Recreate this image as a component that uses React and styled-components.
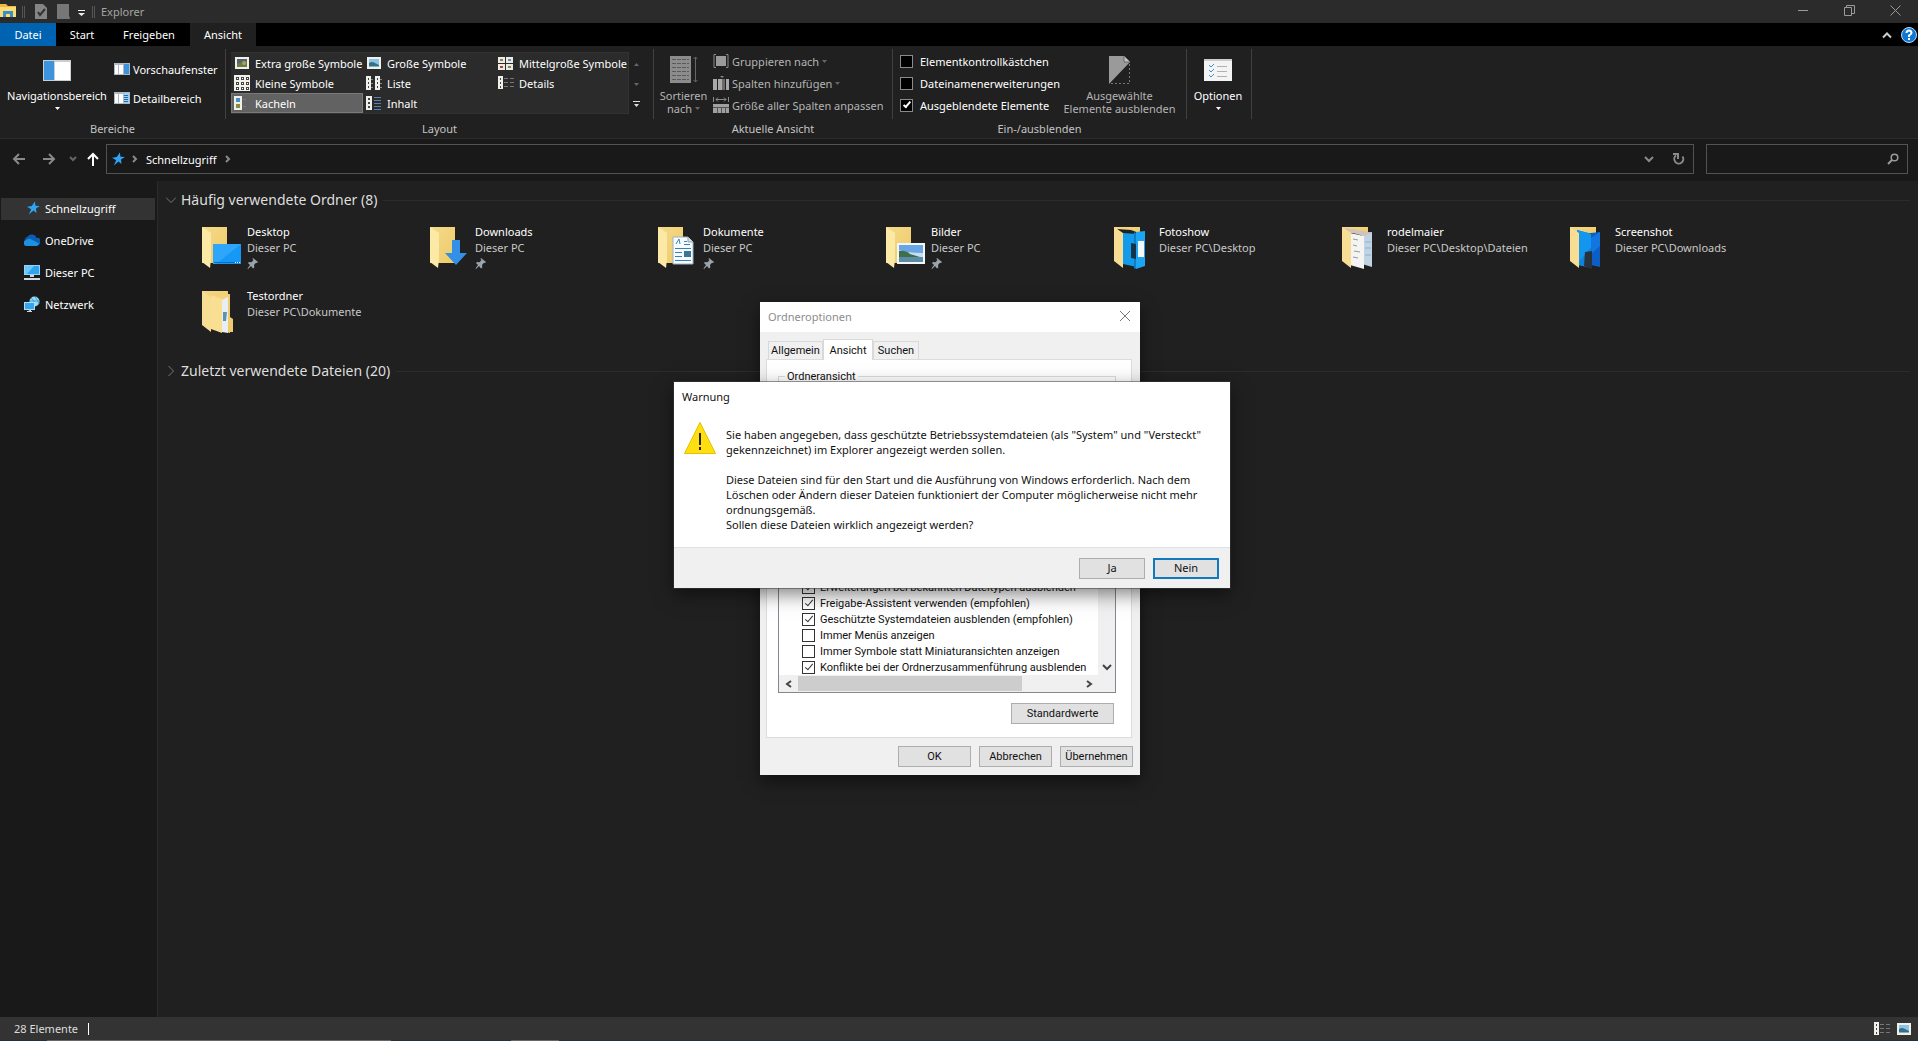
import React from "react";
import styled, { createGlobalStyle } from "styled-components";

const Global = createGlobalStyle`
  *, *::before, *::after { box-sizing: border-box; }
  body { margin: 0; background: #202020; }
  body, button, input { font-family: "Noto Sans", "Open Sans", sans-serif; font-size: 11px; }
  button { margin: 0; padding: 0; border: 0; background: none; color: inherit; text-align: left; }
  h2, p { margin: 0; font-weight: 400; }
  svg { display: block; flex: none; }
`;

const Window = styled.div`
  position: relative;
  display: flex;
  flex-direction: column;
  height: 100vh;
  color: #fff;
  overflow: hidden;
`;

/* ---------- title bar ---------- */
const TitleBar = styled.header`
  display: flex;
  align-items: flex-start;
  height: 23px;
  background: #2b2b2b;
  color: #a5a5a5;
`;
const QuickBar = styled.div`
  display: flex;
  align-items: center;
  flex: 1;
`;
const WindowTitle = styled.span`
  line-height: 20px;
`;
const CaptionButton = styled.button`
  display: flex;
  justify-content: center;
  width: 46px;
  height: 20px;
  align-items: center;
`;

/* ---------- ribbon ---------- */
const TabStrip = styled.nav`
  display: flex;
  height: 23px;
  background: #000;
`;
const RibbonTab = styled.button`
  width: ${(p) => p.$width}px;
  text-align: center;
  line-height: 22px;
  background: ${(p) => (p.$kind === "file" ? "#0063b1" : p.$kind === "active" ? "#202020" : "transparent")};
`;
const StripTools = styled.div`
  display: flex;
  align-items: center;
  gap: 8px;
  margin-left: auto;
`;
const Ribbon = styled.section`
  display: flex;
  height: 93px;
  background: #202020;
  border-bottom: 1px solid #2d2d2d;
`;
const Group = styled.div`
  display: flex;
  flex-direction: column;
  width: ${(p) => p.$width}px;
`;
const GroupBody = styled.div`
  display: flex;
  height: 74px;
  padding: 0 ${(p) => p.$pad || 0}px;
`;
const GroupLabel = styled.div`
  text-align: center;
  line-height: 18px;
  color: #c4c4c4;
`;
const Separator = styled.div`
  width: 1px;
  height: 70px;
  margin-top: 3px;
  background: #404040;
`;
const BigButton = styled.button`
  display: flex;
  flex-direction: column;
  align-items: center;
  width: ${(p) => p.$width}px;
  padding-top: 10px;
  text-align: center;
  line-height: 13px;
  white-space: nowrap;
  color: ${(p) => (p.$dim ? "#b4b4b4" : "#fff")};
`;
const IconSlot = styled.span`
  display: flex;
  align-items: center;
  height: 28px;
  margin-bottom: 5px;
`;
const ArrowLine = styled.span`
  display: flex;
  align-items: center;
  gap: 3px;
  height: 13px;
`;
const Stack = styled.div`
  display: flex;
  flex-direction: column;
  padding-top: ${(p) => p.$top}px;
  gap: ${(p) => p.$gap}px;
`;
const SmallButton = styled.button`
  display: flex;
  align-items: center;
  gap: 3px;
  height: 20px;
  white-space: nowrap;
  color: ${(p) => (p.$dim ? "#b4b4b4" : "#fff")};
`;
const Gallery = styled.div`
  display: grid;
  grid-template-columns: repeat(3, 132px);
  grid-template-rows: repeat(3, 20px);
  width: 398px;
  height: 62px;
  margin: 6px 0 0 5px;
  background: #2b2b2b;
  border: 1px solid #333;
  border-left-width: 0;
`;
const GalleryItem = styled.button`
  display: flex;
  align-items: center;
  gap: 5px;
  padding-left: 3px;
  white-space: nowrap;
  background: ${(p) => (p.$selected ? "#626262" : "transparent")};
  box-shadow: ${(p) => (p.$selected ? "inset 0 0 0 1px #7a7a7a" : "none")};
`;
const GalleryScroll = styled.div`
  display: grid;
  grid-template-rows: repeat(3, 20px);
  place-items: center;
  width: 15px;
  margin-top: 8px;
`;
const OptionLabel = styled.label`
  display: flex;
  align-items: center;
  gap: 7px;
  height: 22px;
  white-space: nowrap;
`;
const Check = styled.input.attrs({ type: "checkbox" })`
  appearance: none;
  position: relative;
  flex: none;
  width: 13px;
  height: 13px;
  margin: 0;
  border: 1px solid ${(p) => (p.$light ? "#333" : "#8a8a8a")};
  background: ${(p) => (p.$light ? "#fff" : "#000")};
  &:checked::before {
    content: "";
    position: absolute;
    left: 4px;
    top: 0;
    width: 4px;
    height: 8px;
    border: solid ${(p) => (p.$light ? "#333" : "#fff")};
    border-width: 0 ${(p) => (p.$light ? "1px 1px" : "2px 2px")} 0;
    transform: rotate(40deg);
  }
`;

/* ---------- address row ---------- */
const AddressRow = styled.div`
  display: flex;
  align-items: center;
  height: 42px;
  padding: 0 10px 2px 12px;
  background: #191919;
`;
const NavButtons = styled.div`
  display: flex;
  align-items: center;
  width: 94px;
`;
const NavButton = styled.button`
  display: flex;
  width: ${(p) => p.$width}px;
`;
const AddressBox = styled.div`
  display: flex;
  align-items: center;
  flex: 1;
  height: 30px;
  padding: 0 7px 0 5px;
  border: 1px solid #535353;
`;
const Crumb = styled.button`
  margin: 0 9px 0 7px;
`;
const AddressTools = styled.div`
  display: flex;
  align-items: center;
  gap: 18px;
  margin-left: auto;
`;
const SearchBox = styled.label`
  display: flex;
  align-items: center;
  width: 202px;
  height: 30px;
  margin-left: 12px;
  padding: 0 8px;
  border: 1px solid #535353;
`;
const SearchInput = styled.input`
  flex: 1;
  min-width: 0;
  border: 0;
  outline: 0;
  background: none;
  color: #fff;
`;

/* ---------- body ---------- */
const Body = styled.div`
  display: flex;
  flex: 1;
  min-height: 0;
`;
const Sidebar = styled.nav`
  display: flex;
  flex-direction: column;
  gap: 10px;
  width: 158px;
  padding: 17px 2px 0 1px;
  background: #191919;
  border-right: 1px solid #2b2b2b;
`;
const SideItem = styled.button`
  display: flex;
  align-items: center;
  gap: 5px;
  height: 22px;
  padding: 0 0 2px 23px;
  background: ${(p) => (p.$active ? "#333" : "transparent")};
`;
const Main = styled.main`
  flex: 1;
  min-width: 0;
  padding: 8px 8px 0;
  background: #202020;
`;
const SectionHead = styled.div`
  display: flex;
  align-items: center;
  height: 22px;
  &::after {
    content: "";
    flex: 1;
    height: 1px;
    margin-left: 6px;
    background: #2c2c2c;
  }
`;
const SectionTitle = styled.h2`
  margin-left: 5px;
  font-size: 14px;
  line-height: 22px;
  color: #dedede;
`;
const Tiles = styled.div`
  display: grid;
  grid-template-columns: repeat(auto-fill, 228px);
  grid-auto-rows: 64px;
  padding: 13px 0 8px 34px;
`;
const Tile = styled.button`
  display: flex;
  align-items: flex-start;
  gap: 3px;
  line-height: 16px;
`;
const TileText = styled.span`
  display: flex;
  flex-direction: column;
  white-space: nowrap;
`;
const TilePath = styled.span`
  color: #c8c8c8;
`;
const StatusBar = styled.footer`
  display: flex;
  align-items: center;
  gap: 10px;
  height: 23px;
  padding: 0 6px 0 14px;
  background: #333;
  color: #dcdcdc;
`;
const StatusMark = styled.span`
  width: 1px;
  height: 12px;
  background: #fff;
`;
const StatusViews = styled.div`
  display: flex;
  gap: 6px;
  margin-left: auto;
`;
const TaskEdge = styled.div`
  height: 1px;
  background: linear-gradient(to right, #22303c 47px, #666 47px 391px, #22303c 391px 511px, #666 511px 559px, #22303c 559px);
`;

/* ---------- dialogs ---------- */
const Dialog = styled.div`
  position: absolute;
  left: calc(50% - 199px);
  top: 302px;
  display: flex;
  flex-direction: column;
  width: 380px;
  height: 473px;
  background: #f0f0f0;
  color: #111;
  box-shadow: 0 6px 16px rgba(0, 0, 0, 0.5);
  &, button { font-family: Roboto, "Liberation Sans", sans-serif; }
`;
const DialogTitle = styled.div`
  display: flex;
  align-items: center;
  justify-content: space-between;
  height: 30px;
  padding: 0 9px 2px 8px;
  background: #fff;
  color: #8c8c8c;
  font-family: "Noto Sans", "Open Sans", sans-serif;
`;
const DialogTabs = styled.div`
  display: flex;
  align-items: flex-end;
  height: 27px;
  padding-left: 8px;
`;
const DialogTab = styled.button`
  width: ${(p) => p.$width}px;
  height: ${(p) => (p.$active ? 21 : 18)}px;
  border: 1px solid #d9d9d9;
  border-bottom: 0;
  background: ${(p) => (p.$active ? "#fff" : "#f0f0f0")};
  margin-bottom: ${(p) => (p.$active ? -1 : 0)}px;
  text-align: center;
  z-index: ${(p) => (p.$active ? 1 : 0)};
`;
const DialogPanel = styled.div`
  display: flex;
  flex-direction: column;
  flex: 1;
  margin: 0 8px 0 6px;
  padding: 10px 15px 13px 11px;
  border: 1px solid #dcdcdc;
  background: #fff;
`;
const ViewGroup = styled.fieldset`
  height: 70px;
  margin: 0;
  padding: 0;
  border: 1px solid #dcdcdc;
  legend { margin-left: 6px; padding: 0 2px; line-height: 13px; }
`;
const ListFrame = styled.div`
  display: flex;
  flex-direction: column;
  flex: 1;
  min-height: 0;
  margin: 8px 0 10px;
  border: 1px solid #828790;
`;
const ListArea = styled.div`
  display: flex;
  flex: 1;
  min-height: 0;
`;
const ListRows = styled.div`
  display: flex;
  flex-direction: column;
  justify-content: flex-end;
  flex: 1;
  padding-left: 23px;
`;
const ListRow = styled.label`
  display: flex;
  align-items: center;
  gap: 5px;
  height: 16px;
  white-space: nowrap;
`;
const VScroll = styled.div`
  display: flex;
  align-items: flex-end;
  justify-content: center;
  width: 17px;
  padding-bottom: 4px;
  background: #f0f0f0;
`;
const HScroll = styled.div`
  display: flex;
  align-items: center;
  height: 17px;
  padding: 0 22px 0 6px;
  background: #f0f0f0;
`;
const HThumb = styled.span`
  width: 224px;
  height: 15px;
  margin: 0 auto 0 6px;
  background: #cdcdcd;
`;
const PushButton = styled.button`
  width: ${(p) => p.$width}px;
  height: 21px;
  background: #e1e1e1;
  border: ${(p) => (p.$focus ? "2px solid #1279bd" : "1px solid #adadad")};
  text-align: center;
  color: #111;
`;
const StandardRow = styled.div`
  display: flex;
  justify-content: flex-end;
  padding-right: 2px;
`;
const DialogActions = styled.div`
  display: flex;
  align-items: flex-start;
  justify-content: flex-end;
  gap: 8px;
  height: 37px;
  padding: 8px 7px 0 0;
`;
const Warning = styled.div`
  position: absolute;
  left: calc(50% - 285px);
  top: 382px;
  display: flex;
  flex-direction: column;
  width: 556px;
  height: 206px;
  background: #fff;
  color: #111;
  box-shadow: 0 0 0 1px rgba(60, 60, 60, 0.5), 0 6px 18px rgba(0, 0, 0, 0.5);
`;
const WarningTitle = styled.div`
  padding-left: 8px;
  line-height: 30px;
`;
const WarningBody = styled.div`
  display: flex;
  flex: 1;
  gap: 10px;
  padding: 10px 0 0 10px;
`;
const WarningText = styled.p`
  padding-top: 5px;
  line-height: 15px;
  white-space: nowrap;
`;
const WarningActions = styled.div`
  display: flex;
  align-items: center;
  justify-content: flex-end;
  gap: 8px;
  height: 41px;
  padding-right: 11px;
  background: #f0f0f0;
  border-top: 1px solid #dfdfdf;
  button { padding-bottom: 2px; }
`;

/* ---------- icons ---------- */
const Stroke = ({ w, h, d, c = "#9a9a9a", s = 1 }) => (
  <svg width={w} height={h} viewBox={`0 0 ${w} ${h}`} fill="none" stroke={c} strokeWidth={s}>
    <path d={d} />
  </svg>
);
const Caret = ({ c = "#fff", up }) => (
  <svg width="5" height="3" viewBox="0 0 5 3">
    <path d={up ? "M0 3h5L2.5 0z" : "M0 0h5L2.5 3z"} fill={c} />
  </svg>
);
const Star = ({ inset = 0 }) => (
  <svg width={13 + inset} height="14" viewBox={`${-inset} 0 ${13 + inset} 14`}>
    <path d="M7.800 .5l.7 4.200 4.300.3-3.800 2.500.5 4.600-3-2.500-4.700 3.900 2.400-5.200L0 5.800l4.800-.9z" fill="#2fa4f2" />
  </svg>
);
const SideIcons = {
  cloud: (
    <svg width="16" height="16" viewBox="0 0 16 16">
      <path d="M2 11.5A4 4 0 0 1 3.500 4.700 5 5 0 0 1 12.500 6 3.500 3.500 0 0 1 14 13H3z" fill="#0a5fb5" />
      <path d="M3 14a3 3 0 0 1-.5-6 4 4 0 0 1 5-.5L15 11.500A3 3 0 0 1 13 14z" fill="#1e90e0" />
    </svg>
  ),
  pc: (
    <svg width="16" height="16" viewBox="0 0 16 16">
      <path d="M0 1h16v10H0z" fill="#8ed4fb" />
      <path d="M1 2h14v8H1z" fill="#2fa3ee" />
      <path d="M1 2h9L3 10H1z" fill="#6cc6fa" />
      <path d="M6 11h4v2H6zM0 14h16v2H0z" fill="#d0d8de" />
    </svg>
  ),
  net: (
    <svg width="16" height="16" viewBox="0 0 16 16">
      <circle cx="10.500" cy="5.500" r="5" fill="#9adcf8" />
      <path d="M7 2q4 2 3 8M11 1q3 3 4 7M6 5h9" stroke="#3a9fdc" fill="none" />
      <path d="M0 6h11v8H0z" fill="#a8dffb" />
      <path d="M1 7h9v6H1z" fill="#35a5ee" />
      <path d="M4 14h3v1H3v1h5v-1H6z" fill="#d0d8de" />
    </svg>
  ),
};
const PaneIcon = ({ kind }) => (
  <svg width="16" height="12" viewBox="0 0 16 12">
    <path d="M0 0h16v12H0z" fill="#aebac2" />
    <path d="M1 2h3v9H1zM5 2h4v9H5z" fill="#fff" />
    <path d="M10 1h5v10h-5z" fill={kind === "details" ? "#9fd0f2" : "#3d94dc"} />
    {kind === "details" && <path d="M10 3.500h4M10 5.500h4M10 7.500h4M10 9.500h4" stroke="#1f6db2" />}
  </svg>
);
const Photo = ({ dark }) => (
  <svg width="16" height="16" viewBox="0 0 16 16">
    <path d="M1 2h14v12H1z" fill="#f0efe8" />
    <path d="M3 4h10v8H3z" fill={dark ? "#56626e" : "#8cc4e8"} />
    <path d={dark ? "M3 9q4-2 5-1l5-2v6H3z" : "M3 8q3-2 6 0l4 2v2H3z"} fill={dark ? "#6d7a48" : "#35708a"} />
    {!dark && <path d="M3 11h10v1H3z" fill="#7fb0c4" />}
    {dark && <circle cx="10" cy="8" r="2" fill="#a3a354" />}
  </svg>
);
const cells = (cols, rows, sx, sy) =>
  cols.flatMap((x) => rows.map((y) => <rect key={`${x}-${y}`} x={x} y={y} width={sx} height={sy} fill="#444" />));
const ViewIcon = ({ kind }) => {
  if (kind === "xl") return <Photo dark />;
  if (kind === "l") return <Photo />;
  return (
    <svg width="16" height="16" viewBox="0 0 16 16">
      {kind === "m" && (
        <>
          <path d="M0 2h7v6H0zM8 2h7v6H8zM0 9h7v6H0zM8 9h7v6H8z" fill="#eceae2" />
          <path d="M2 4h3v2H2zM10 11h3v2h-3z" fill="#7a8a4c" />
          <path d="M10 4h3v2h-3z" fill="#5b94bd" />
          <path d="M2 11h3v2H2z" fill="#a3482e" />
        </>
      )}
      {kind === "s" && (
        <>
          <path d="M0 0h16v16H0z" fill="#f2f2ea" />
          {cells([2, 7, 12], [2, 7, 12], 3, 3)}
          <path d="M3 3h1v1H3zM8 3h1v1H8zM13 3h1v1h-1zM3 8h1v1H3zM8 8h1v1H8zM13 8h1v1h-1zM3 13h1v1H3zM8 13h1v1H8zM13 13h1v1h-1z" fill="#fff" />
        </>
      )}
      {kind === "list" && (
        <>
          <path d="M0 1h5v14H0zM9 1h5v14H9z" fill="#f0f0ea" />
          {cells([2, 11], [3, 7, 11], 1, 2)}
          <path d="M5 4.500h2M5 8.500h2M5 12.500h2M14 4.500h2M14 8.500h2M14 12.500h2" stroke="#888" />
        </>
      )}
      {kind === "details" && (
        <>
          <path d="M0 1h5v13H0z" fill="#f0f0ea" />
          {cells([2], [3, 7, 11], 1, 2)}
          <path d="M6 3.500h4M6 7.500h4M6 11.500h4M12 3.500h4M12 7.500h4M12 11.500h4" stroke="#777" />
        </>
      )}
      {kind === "tiles" && (
        <>
          <path d="M0 1h8v14H0z" fill="#f0f0ea" />
          <path d="M2 3h4v4H2z" fill="#4b8fc0" />
          <path d="M2 9h4v4H2z" fill="#8a8a3c" />
          <path d="M9 4.500h3M9 11.500h3" stroke="#777" />
        </>
      )}
      {kind === "content" && (
        <>
          <path d="M0 1h6v14H0z" fill="#f0f0ea" />
          {cells([2], [3, 7, 11], 2, 2)}
          <path d="M8 2.500h7M8 5.500h7M8 8.500h7M8 11.500h7M8 14.500h7" stroke="#5b7fb0" />
        </>
      )}
    </svg>
  );
};
const GroupByIcon = () => (
  <svg width="16" height="14" viewBox="0 0 16 14">
    <path d="M3 .5H1v13h2M13 .5h2v13h-2" fill="none" stroke="#8a8a8a" />
    <path d="M3 2h10v10H3z" fill="#9a9a9a" />
  </svg>
);
const ColumnsIcon = () => (
  <svg width="16" height="14" viewBox="0 0 16 14">
    <path d="M0 3h4v11H0zM5 3h4v11H5zM13 3h3v11h-3z" fill="#a8a8a8" />
    <path d="M9 3h3v11H9z" fill="#6a6a6a" />
    <path d="M7 0h4L9 2z" fill="#8a8a8a" />
  </svg>
);
const FitIcon = () => (
  <svg width="16" height="16" viewBox="0 0 16 16">
    <path d="M.5 0v5M15.500 0v5M3 2.500h10M5 .5l-2 2 2 2M11 .5l2 2-2 2" fill="none" stroke="#8a8a8a" />
    <path d="M0 7h16v9H0z" fill="#a0a0a0" />
    <path d="M0 10.500h16M4.500 11v5M8.500 11v5M12.500 11v5" stroke="#555" />
  </svg>
);

const openFolders = {
  blue: (
    <>
      <path d="M5 5l14 1 8 3-2 1-16-1z" fill="#222" />
      <path d="M11 9l14 1v33l-14-3z" fill="#129bea" />
      <path d="M24 8l9-1v35l-9 3z" fill="#1ba5f3" />
      <path d="M22 8l2 1v36l-2-1z" fill="#0b7ec6" />
      <path d="M19 19l5 1v15l-5-1z" fill="#143247" />
      <path d="M26 17h6v16h-6z" fill="#f4f8fb" />
    </>
  ),
  paper: (
    <>
      <path d="M22 9l10-1v35l-10-3z" fill="#bfd3e2" />
      <path d="M25 18h6M25 24h6M25 31h6" stroke="#8fb0c8" />
      <path d="M4 4l20 3 8 2-8 3L9 8z" fill="#cfc3bb" />
      <path d="M10 9l14 3v33L10 41z" fill="#f4f4f2" />
      <path d="M13 15l5 1M13 21l4 1M14 27l6 1M13 33l5 1" stroke="#999" />
    </>
  ),
  screen: (
    <>
      <path d="M9 6l15 4v34L9 41z" fill="#0c83dc" />
      <path d="M9 6l15 4v12L9 40z" fill="#1397ee" />
      <path d="M23 9l9-1v35l-9-2z" fill="#0b5fc4" />
      <path d="M32 8v14l-9 8V14z" fill="#1176e0" />
      <path d="M17 28l7-1v18l-8-3z" fill="#28323c" />
    </>
  ),
  test: (
    <>
      <path d="M12 7l18-1v39l-18-5z" fill="#f3d27a" />
      <path d="M11 7l11 4v34l-11-4z" fill="#f8df92" />
      <path d="M22 12l6-3v36l-6-1z" fill="#e8eef2" />
      <path d="M23 24h4l-1 9h-3z" fill="#5d93a8" />
      <path d="M28 9l2-2v22l3 2v13h-5z" fill="#efcb70" />
    </>
  ),
};
const closedFolders = {
  desktop: (
    <>
      <path d="M13 20h28v20H13z" fill="#1698f6" />
      <path d="M13 20h28L16 40h-3z" fill="#2ea7fb" />
      <path d="M14 38.500h26" stroke="#0d6db8" />
      <path d="M35 38.500h5" stroke="#fff" strokeDasharray="1 1" />
    </>
  ),
  down: <path d="M24 16h8v13h7L28 41 17 29h7z" fill="#3490e6" />,
  docs: (
    <>
      <path d="M17 13h15l5 5v22H17z" fill="#f8fafc" stroke="#9db2c2" />
      <path d="M32 13v5h5" fill="#d5dfe6" stroke="#8fa3b2" />
      <path d="M20 20l3-5 1 5M28 17.500h3M28 20.500h6M19 24.500h16M19 28.500h7M19 32.500h7M19 36.500h16" fill="none" stroke="#2e86b8" />
      <path d="M28 27h7v6h-7z" fill="#3d7694" />
    </>
  ),
  pics: (
    <>
      <path d="M13 19h28v21H13z" fill="#f4f7f9" />
      <path d="M15 21h24v17H15z" fill="#6aa5e6" />
      <path d="M15 26q8 3 24 3v4H15z" fill="#c6dff0" />
      <path d="M15 27q7-1 11 3l10 3H15z" fill="#3f6f4a" />
      <path d="M15 33h24v5H15z" fill="#5c8ba6" />
    </>
  ),
};
const Folder = ({ kind }) => {
  const open = openFolders[kind];
  return (
    <svg width="44" height="48" viewBox="0 0 44 48">
      <defs>
        <linearGradient id={`back-${kind}`} x1="0" y1="0" x2="1" y2="1">
          <stop offset="0" stopColor="#f5da8c" />
          <stop offset="1" stopColor="#eecb68" />
        </linearGradient>
      </defs>
      <path d={open ? "M2 3h26v6H2z" : "M2 3h25v36H2z"} fill={`url(#back-${kind})`} />
      {open}
      <path d={open ? "M2 3l9 6v35l-9-7z" : "M2 3l9 6v26l-1 9-8-6z"} fill={open ? "#f8de94" : "#fde9a6"} />
      {closedFolders[kind]}
    </svg>
  );
};
const Pin = () => (
  <svg width="12" height="16" viewBox="0 0 12 16">
    <path d="M6 2l5 4-1 1-1-.3-2 2.300.3 2.500-1.300 1-2-2.500L1 13l-.5-.5L3 9 1 7l1-1 2.500.2L6.500 4 5.500 3z" fill="#9aa4ad" />
  </svg>
);

/* ---------- data ---------- */
const views = [
  ["xl", "Extra große Symbole"],
  ["l", "Große Symbole"],
  ["m", "Mittelgroße Symbole"],
  ["s", "Kleine Symbole"],
  ["list", "Liste"],
  ["details", "Details"],
  ["tiles", "Kacheln"],
  ["content", "Inhalt"],
];
const folders = [
  ["desktop", "Desktop", "Dieser PC", true],
  ["down", "Downloads", "Dieser PC", true],
  ["docs", "Dokumente", "Dieser PC", true],
  ["pics", "Bilder", "Dieser PC", true],
  ["blue", "Fotoshow", "Dieser PC\\Desktop"],
  ["paper", "rodelmaier", "Dieser PC\\Desktop\\Dateien"],
  ["screen", "Screenshot", "Dieser PC\\Downloads"],
  ["test", "Testordner", "Dieser PC\\Dokumente"],
];
const settings = [
  ["Erweiterungen bei bekannten Dateitypen ausblenden", true],
  ["Freigabe-Assistent verwenden (empfohlen)", true],
  ["Geschützte Systemdateien ausblenden (empfohlen)", true],
  ["Immer Menüs anzeigen", false],
  ["Immer Symbole statt Miniaturansichten anzeigen", false],
  ["Konflikte bei der Ordnerzusammenführung ausblenden", true],
];

const TopBars = () => (
  <>
    <TitleBar>
      <QuickBar>
        <svg width="101" height="23" viewBox="0 0 101 23">
          <path d="M0 4h6l2 2h8v11H0z" fill="#f0b93c" />
          <path d="M0 7h16v10H0z" fill="#fbdc79" />
          <path d="M3 17v-6h10v6h-3v-3H6v3z" fill="#3a8fc4" />
          <path d="M22.500 6v12M24.500 6v12M92.500 6v12M94.500 6v12" stroke="#555" />
          <path d="M35 4h8l4 4v11H35z" fill="#858585" />
          <path d="M38 12l2 3 5-6" fill="none" stroke="#333" strokeWidth="2" />
          <path d="M57 4h12v11l1 4H57z" fill="#777" />
          <path d="M78 10.500h7" stroke="#eee" />
          <path d="M78 13h7l-3.500 3z" fill="#eee" />
        </svg>
        <WindowTitle>Explorer</WindowTitle>
      </QuickBar>
      <CaptionButton aria-label="Minimieren"><Stroke w={10} h={11} d="M0 5.500h10" /></CaptionButton>
      <CaptionButton aria-label="Verkleinern"><Stroke w={11} h={11} d="M.5 2.500h7v8h-7zM2.500 2V.5h8v8H8" /></CaptionButton>
      <CaptionButton aria-label="Schließen"><Stroke w={11} h={11} d="M.5.5l10 10M10.500.5l-10 10" /></CaptionButton>
    </TitleBar>
    <TabStrip>
      <RibbonTab $width={56} $kind="file">Datei</RibbonTab>
      <RibbonTab $width={52}>Start</RibbonTab>
      <RibbonTab $width={82}>Freigeben</RibbonTab>
      <RibbonTab $width={66} $kind="active">Ansicht</RibbonTab>
      <StripTools>
        <Stroke w={10} h={8} d="M1 6.500l4-4 4 4" c="#ccc" s={2} />
        <svg width="18" height="18" viewBox="0 0 18 18">
          <circle cx="9" cy="9" r="7.500" fill="#0f78d4" stroke="#b9dcf7" />
          <path d="M6.500 7q0-2.500 2.500-2.500T11.500 7Q11.500 8 9 9.500V11M9 12v2" fill="none" stroke="#fff" strokeWidth="2" />
        </svg>
      </StripTools>
    </TabStrip>
  </>
);

const RibbonView = () => (
  <Ribbon>
    <Group $width={225}>
      <GroupBody>
        <BigButton $width={114}>
          <IconSlot>
            <svg width="28" height="21" viewBox="0 0 28 21">
              <path d="M0 0h28v21H0z" fill="#c9ced2" />
              <path d="M1 1h10v19H1z" fill="#3d94dc" />
              <path d="M12 2h15v18H12z" fill="#fff" />
            </svg>
          </IconSlot>
          Navigationsbereich
          <ArrowLine><Caret /></ArrowLine>
        </BigButton>
        <Stack $top={13} $gap={9}>
          <SmallButton><PaneIcon />Vorschaufenster</SmallButton>
          <SmallButton><PaneIcon kind="details" />Detailbereich</SmallButton>
        </Stack>
      </GroupBody>
      <GroupLabel>Bereiche</GroupLabel>
    </Group>
    <Separator />
    <Group $width={427}>
      <GroupBody>
        <Gallery>
          {views.map(([k, name]) => (
            <GalleryItem key={k} $selected={k === "tiles"}><ViewIcon kind={k} />{name}</GalleryItem>
          ))}
        </Gallery>
        <GalleryScroll>
          <Caret c="#666" up />
          <Caret c="#666" />
          <svg width="7" height="6" viewBox="0 0 7 6"><path d="M0 0h7v1H0zM1 3h5L3.500 6z" fill="#ddd" /></svg>
        </GalleryScroll>
      </GroupBody>
      <GroupLabel>Layout</GroupLabel>
    </Group>
    <Separator />
    <Group $width={238}>
      <GroupBody>
        <BigButton $width={59} $dim>
          <IconSlot>
            <svg width="28" height="28" viewBox="0 0 28 28">
              <path d="M0 0h21v27H0z" fill="#8c8c8c" />
              <path d="M2 3.500h17M2 7.500h17M2 11.500h17M2 15.500h17M2 19.500h17M2 23.500h17" stroke="#5a5a5a" strokeDasharray="4 1" />
              <path d="M25.500 1v25M23.500 3l2-2 2 2M23.500 24l2 2 2-2" fill="none" stroke="#666" />
            </svg>
          </IconSlot>
          Sortieren
          <ArrowLine>nach <Caret c="#666" /></ArrowLine>
        </BigButton>
        <Stack $top={5} $gap={2}>
          <SmallButton $dim><GroupByIcon />Gruppieren nach <Caret c="#666" /></SmallButton>
          <SmallButton $dim><ColumnsIcon />Spalten hinzufügen <Caret c="#666" /></SmallButton>
          <SmallButton $dim><FitIcon />Größe aller Spalten anpassen</SmallButton>
        </Stack>
      </GroupBody>
      <GroupLabel>Aktuelle Ansicht</GroupLabel>
    </Group>
    <Separator />
    <Group $width={293}>
      <GroupBody $pad={7}>
        <Stack $top={4} $gap={0}>
          <OptionLabel><Check />Elementkontrollkästchen</OptionLabel>
          <OptionLabel><Check />Dateinamenerweiterungen</OptionLabel>
          <OptionLabel><Check defaultChecked />Ausgeblendete Elemente</OptionLabel>
        </Stack>
        <BigButton $width={132} $dim>
          <IconSlot>
            <svg width="22" height="28" viewBox="0 0 22 28">
              <path d="M0 0h15l6 6L0 28z" fill="#9a9a9a" />
              <path d="M15 0v6h6" fill="#c4c4c4" stroke="#666" />
              <path d="M20.500 8v19.500H1" fill="none" stroke="#777" strokeDasharray="2 2" />
            </svg>
          </IconSlot>
          Ausgewählte
          <span>Elemente ausblenden</span>
        </BigButton>
      </GroupBody>
      <GroupLabel>Ein-/ausblenden</GroupLabel>
    </Group>
    <Separator />
    <Group $width={64}>
      <GroupBody>
        <BigButton $width={62}>
          <IconSlot>
            <svg width="28" height="22" viewBox="0 0 28 22">
              <path d="M0 0h28v22H0z" fill="#f4f4f4" />
              <path d="M0 0h28v2H0z" fill="#ccc" />
              <path d="M5 6l2 2 3-3M5 11l2 2 3-3M5 16l2 2 3-3" fill="none" stroke="#3d8fc8" />
              <path d="M13 7.500h10M13 12.500h10M13 17.500h10" stroke="#b0b0b0" />
            </svg>
          </IconSlot>
          Optionen
          <ArrowLine><Caret /></ArrowLine>
        </BigButton>
      </GroupBody>
    </Group>
    <Separator />
  </Ribbon>
);

const Address = () => (
  <AddressRow>
    <NavButtons>
      <NavButton $width={30} aria-label="Zurück"><Stroke w={14} h={12} d="M13 6H2M7 1L2 6l5 5" c="#8a8a8a" s={2} /></NavButton>
      <NavButton $width={27} aria-label="Vorwärts"><Stroke w={14} h={12} d="M1 6h11M7 1l5 5-5 5" c="#8a8a8a" s={2} /></NavButton>
      <NavButton $width={17} aria-label="Verlauf"><Stroke w={8} h={6} d="M1 1l3 3 3-3" c="#666" s={2} /></NavButton>
      <NavButton $width={14} aria-label="Nach oben"><Stroke w={14} h={14} d="M7 14V2M2 7l5-5 5 5" c="#fff" s={2} /></NavButton>
    </NavButtons>
    <AddressBox>
      <Star />
      <Stroke w={14} h={8} d="M8 1l3 3-3 3" c="#8a8a8a" s={2} />
      <Crumb>Schnellzugriff</Crumb>
      <Stroke w={6} h={8} d="M1 1l3 3-3 3" c="#8a8a8a" s={2} />
      <AddressTools>
        <Stroke w={10} h={8} d="M1 2l4 4 4-4" c="#8a8a8a" s={2} />
        <Stroke w={14} h={14} d="M4 3.500a4.500 4.500 0 1 0 6.500 1M1 2h5v5" c="#8a8a8a" s={2} />
      </AddressTools>
    </AddressBox>
    <SearchBox>
      <SearchInput aria-label="Suchen" />
      <svg width="12" height="12" viewBox="0 0 12 12" fill="none" stroke="#9a9a9a">
        <circle cx="7.500" cy="4.500" r="3.300" strokeWidth="1.500" />
        <path d="M5 7l-4 4" strokeWidth="2" />
      </svg>
    </SearchBox>
  </AddressRow>
);

const CloseX = () => <Stroke w={12} h={12} d="M1 1l10 10M11 1L1 11" c="#777" />;

const FolderOptions = () => (
  <Dialog role="dialog" aria-label="Ordneroptionen">
    <DialogTitle>Ordneroptionen<button aria-label="Schließen"><CloseX /></button></DialogTitle>
    <DialogTabs>
      <DialogTab $width={55}>Allgemein</DialogTab>
      <DialogTab $width={50} $active>Ansicht</DialogTab>
      <DialogTab $width={46}>Suchen</DialogTab>
    </DialogTabs>
    <DialogPanel>
      <ViewGroup><legend>Ordneransicht</legend></ViewGroup>
      <ListFrame>
        <ListArea>
          <ListRows>
            {settings.map(([name, on]) => (
              <ListRow key={name}><Check $light defaultChecked={on} />{name}</ListRow>
            ))}
          </ListRows>
          <VScroll><Stroke w={10} h={8} d="M1 2l4 4 4-4" c="#444" s={2} /></VScroll>
        </ListArea>
        <HScroll>
          <Stroke w={7} h={8} d="M6 1L2 4l4 3" c="#444" s={2} />
          <HThumb />
          <Stroke w={7} h={8} d="M1 1l4 3-4 3" c="#444" s={2} />
        </HScroll>
      </ListFrame>
      <StandardRow><PushButton $width={103}>Standardwerte</PushButton></StandardRow>
    </DialogPanel>
    <DialogActions>
      <PushButton $width={73}>OK</PushButton>
      <PushButton $width={73}>Abbrechen</PushButton>
      <PushButton $width={73}>Übernehmen</PushButton>
    </DialogActions>
  </Dialog>
);

const WarningBox = () => (
  <Warning role="alertdialog" aria-label="Warnung">
    <WarningTitle>Warnung</WarningTitle>
    <WarningBody>
      <svg width="32" height="32" viewBox="0 0 32 32">
        <path d="M16 0.500L31.500 31.500H.5z" fill="#ffdf0f" stroke="#e6c000" />
        <path d="M16 11v12M16 25v3" stroke="#222" strokeWidth="2" />
      </svg>
      <WarningText>
        Sie haben angegeben, dass geschützte Betriebssystemdateien (als "System" und "Versteckt"<br />
        gekennzeichnet) im Explorer angezeigt werden sollen.<br />
        <br />
        Diese Dateien sind für den Start und die Ausführung von Windows erforderlich. Nach dem<br />
        Löschen oder Ändern dieser Dateien funktioniert der Computer möglicherweise nicht mehr<br />
        ordnungsgemäß.<br />
        Sollen diese Dateien wirklich angezeigt werden?
      </WarningText>
    </WarningBody>
    <WarningActions>
      <PushButton $width={66}>Ja</PushButton>
      <PushButton $width={66} $focus>Nein</PushButton>
    </WarningActions>
  </Warning>
);

export default function App() {
  return (
    <Window>
      <Global />
      <TopBars />
      <RibbonView />
      <Address />
      <Body>
        <Sidebar>
          <SideItem $active><Star inset={3} />Schnellzugriff</SideItem>
          <SideItem>{SideIcons.cloud}OneDrive</SideItem>
          <SideItem>{SideIcons.pc}Dieser PC</SideItem>
          <SideItem>{SideIcons.net}Netzwerk</SideItem>
        </Sidebar>
        <Main>
          <SectionHead>
            <Stroke w={10} h={10} d="M0 2.500l5 5 5-5" c="#777" />
            <SectionTitle>Häufig verwendete Ordner (8)</SectionTitle>
          </SectionHead>
          <Tiles>
            {folders.map(([kind, name, path, pinned]) => (
              <Tile key={name}>
                <Folder kind={kind} />
                <TileText>
                  {name}
                  <TilePath>{path}</TilePath>
                  {pinned && <Pin />}
                </TileText>
              </Tile>
            ))}
          </Tiles>
          <SectionHead>
            <Stroke w={10} h={10} d="M2.500 0l5 5-5 5" c="#777" />
            <SectionTitle>Zuletzt verwendete Dateien (20)</SectionTitle>
          </SectionHead>
        </Main>
      </Body>
      <StatusBar>
        28 Elemente
        <StatusMark />
        <StatusViews>
          <ViewIcon kind="details" />
          <Photo />
        </StatusViews>
      </StatusBar>
      <TaskEdge />
      <FolderOptions />
      <WarningBox />
    </Window>
  );
}
